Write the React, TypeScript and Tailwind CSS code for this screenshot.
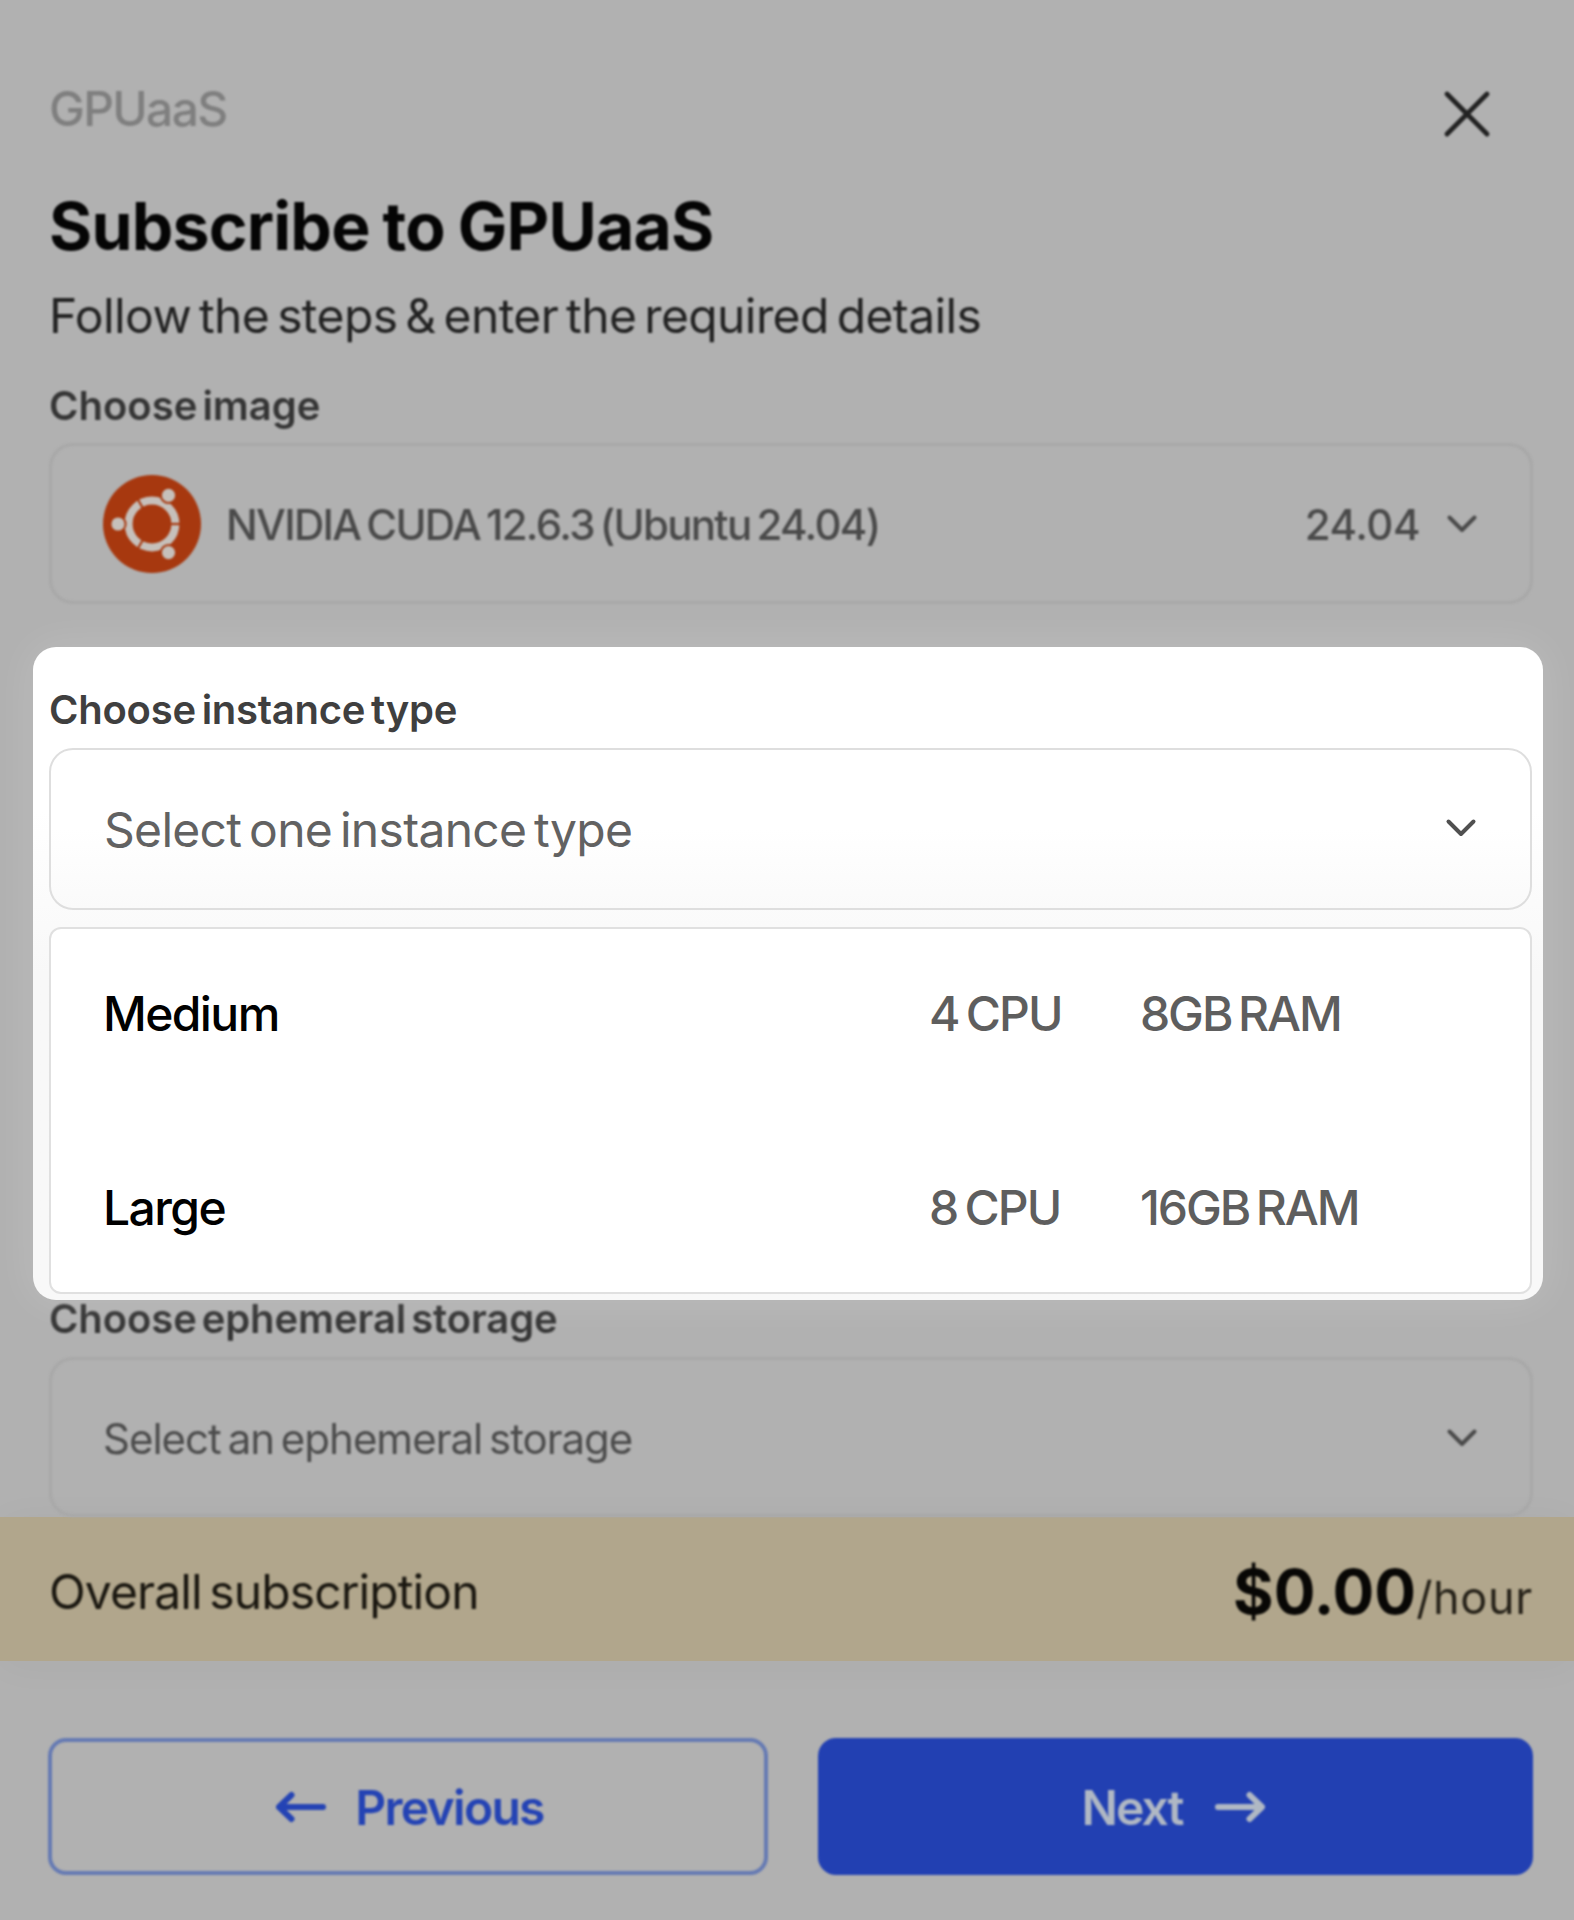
import type { ReactNode } from "react";

interface InstanceType {
  name: string;
  cpu: string;
  ram: string;
}

const INSTANCE_TYPES: InstanceType[] = [
  { name: "Medium", cpu: "4 CPU", ram: "8GB RAM" },
  { name: "Large", cpu: "8 CPU", ram: "16GB RAM" },
];

/** Ring gaps sit between the dots, 60 degrees off from them. */
const RING_GAPS = [0, 120, 240];
const DOTS = [
  { cx: 15, cy: 49 },
  { cx: 65.5, cy: 20.4 },
  { cx: 65.5, cy: 77.6 },
];

function UbuntuLogo() {
  return (
    <svg viewBox="0 0 98 98" className="size-[98px] shrink-0">
      <circle cx="49" cy="49" r="49" fill="#a7380f" />
      <circle cx="49" cy="49" r="23.4" fill="none" stroke="#c6c0bb" strokeWidth="8" />
      {RING_GAPS.map((deg) => (
        <line key={deg} x1="66" y1="49" x2="79" y2="49" stroke="#a7380f" strokeWidth="2.2" transform={`rotate(${deg} 49 49)`} />
      ))}
      {DOTS.map((d) => (
        <circle key={d.cy} cx={d.cx} cy={d.cy} r="7.6" fill="#c6c0bb" stroke="#a7380f" strokeWidth="2" />
      ))}
    </svg>
  );
}

function Chevron({ className = "" }: { className?: string }) {
  return (
    <svg viewBox="0 0 32 20" fill="none" stroke="currentColor" strokeWidth="4" strokeLinecap="round" strokeLinejoin="round" className={`h-5 w-8 shrink-0 ${className}`}>
      <path d="M3.5 3.5 16 16 28.5 3.5" />
    </svg>
  );
}

function Arrow({ className = "" }: { className?: string }) {
  return (
    <svg viewBox="0 0 50 32" fill="none" stroke="currentColor" strokeWidth="6" strokeLinecap="round" strokeLinejoin="round" className={`h-8 w-[50px] shrink-0 ${className}`}>
      <path d="M3 16H46M34.5 4 47 16 34.5 28" />
    </svg>
  );
}

function SelectBox({ children, className = "" }: { children: ReactNode; className?: string }) {
  return (
    <div className={`flex items-center justify-between rounded-[24px] ${className}`}>
      {children}
    </div>
  );
}

export default function App() {
  return (
    <div className="flex h-[1920px] w-[1574px] flex-col overflow-hidden bg-[#b1b1b1] font-['Inter',sans-serif] leading-none whitespace-nowrap">
      {/* Header */}
      <div className="pt-[85px] pr-[41px] pl-[49px] blur-[1px]">
        <div className="flex h-12 justify-between">
          <p className="text-[48px] font-medium tracking-[-1.7px] text-[#7f7f7f]">GPUaaS</p>
          <svg viewBox="0 0 48 48" fill="none" stroke="#222222" strokeWidth="4.8" strokeLinecap="round" className="mt-[5px] mr-[42px] size-12">
            <path d="M4 4l40 40M44 4 4 44" />
          </svg>
        </div>
        <h1 className="mt-[60px] text-[66px] font-bold tracking-[-0.8px] text-[#050505] [word-spacing:-2px]">Subscribe to GPUaaS</h1>
        <p className="mt-[33px] text-[48px] tracking-[-0.6px] text-[#222222] [word-spacing:-5px]">
          Follow the steps &amp; enter the required details
        </p>
        <p className="mt-[46px] text-[40px] font-semibold text-[#353535] [word-spacing:-5px]">Choose image</p>
        <SelectBox className="mt-[17px] h-[161px] border-3 border-[#a8a8a8] pr-[52px] pl-[51px]">
          <div className="flex items-center gap-[25px]">
            <UbuntuLogo />
            <span className="pt-0.5 text-[42px] font-medium tracking-[-1.7px] text-[#4a4a4a] [word-spacing:-3.5px]">
              NVIDIA CUDA 12.6.3 (Ubuntu 24.04)
            </span>
          </div>
          <div className="flex items-center gap-[26px] text-[#4a4a4a]">
            <span className="pt-0.5 text-[42px] font-medium tracking-[-0.5px]">24.04</span>
            <Chevron />
          </div>
        </SelectBox>
      </div>

      {/* Highlighted step */}
      <div className="relative z-10 mt-[43px] mr-[31px] ml-[33px] h-[653px] rounded-[23px] bg-linear-to-b from-white from-25% to-[#f8f8f8] to-50% pt-[43px] pr-[11px] pl-4 shadow-[0_0_40px_4px_rgba(255,255,255,0.13)]">
        <p className="text-[40px] font-semibold tracking-[-0.25px] text-[#3f3f3f] [word-spacing:-4px]">Choose instance type</p>
        <SelectBox className="mt-[18px] h-[162px] border-2 border-[#dedede] bg-linear-to-b from-white from-50% to-[#fafafa] pr-[53px] pl-[53px]">
          <span className="pt-0.5 text-[48px] tracking-[-0.7px] text-[#626262] [word-spacing:-5px]">Select one instance type</span>
          <Chevron className="-mt-0.5 text-[#505050]" />
        </SelectBox>
        <div className="mt-[17px] flex h-[367px] flex-col gap-[146px] rounded-[12px] border-2 border-[#e0e0e0] bg-white pt-[61px] pl-[52px]">
          {INSTANCE_TYPES.map((t) => (
            <div key={t.name} className="flex text-[48px] font-medium text-[#5e5e5e] [word-spacing:-4px]">
              <span className="flex-1 tracking-[-1.6px] text-black">{t.name}</span>
              <span className="w-[211px] tracking-[-1.8px]">{t.cpu}</span>
              <span className="w-[390px] tracking-[-2.1px]">{t.ram}</span>
            </div>
          ))}
        </div>
      </div>

      {/* Storage */}
      <div className="-mt-px pr-[41px] pl-[49px] blur-[1px]">
        <p className="text-[40px] font-semibold tracking-[-0.1px] text-[#353535] [word-spacing:-5px]">Choose ephemeral storage</p>
        <SelectBox className="mt-[18px] h-[160px] border-3 border-[#a8a8a8] pr-[52px] pl-[51px]">
          <span className="pt-1 text-[42px] tracking-[-1px] text-[#4c4c4c] [word-spacing:-4px]">Select an ephemeral storage</span>
          <Chevron className="mt-0.5 text-[#4a4a4a]" />
        </SelectBox>
      </div>

      {/* Price bar */}
      <div className="flex h-[144px] items-center justify-between bg-[#b1a68c] pt-1.5 pr-[41px] pl-[49px] shadow-[0_4px_40px_rgba(0,0,0,0.03)]">
        <span className="text-[48px] tracking-[-0.9px] text-[#1a1710] blur-[1px] [word-spacing:-5px]">Overall subscription</span>
        <span className="flex items-baseline blur-[1px]">
          <span className="text-[62px] font-bold text-[#080705]">$0.00</span>
          <span className="text-[45px] tracking-[0.7px] text-[#252118]">/hour</span>
        </span>
      </div>

      {/* Actions */}
      <div className="mt-[77px] flex gap-[50px] pr-[41px] pl-[48px] text-[48px] font-semibold blur-[1px]">
        <button className="flex h-[137px] w-[720px] items-center justify-center gap-[29px] rounded-[18px] border-4 border-[#657ab3] pl-1 text-[#2443b4]">
          <Arrow className="rotate-180" />
          <span className="pt-0.5 tracking-[-1.7px]">Previous</span>
        </button>
        <button className="flex h-[137px] flex-1 items-center justify-center gap-[33px] rounded-[18px] bg-[#2240b2] pr-1 text-[#b0b8c4]">
          <span className="pt-0.5 tracking-[-2px]">Next</span>
          <Arrow />
        </button>
      </div>
    </div>
  );
}
